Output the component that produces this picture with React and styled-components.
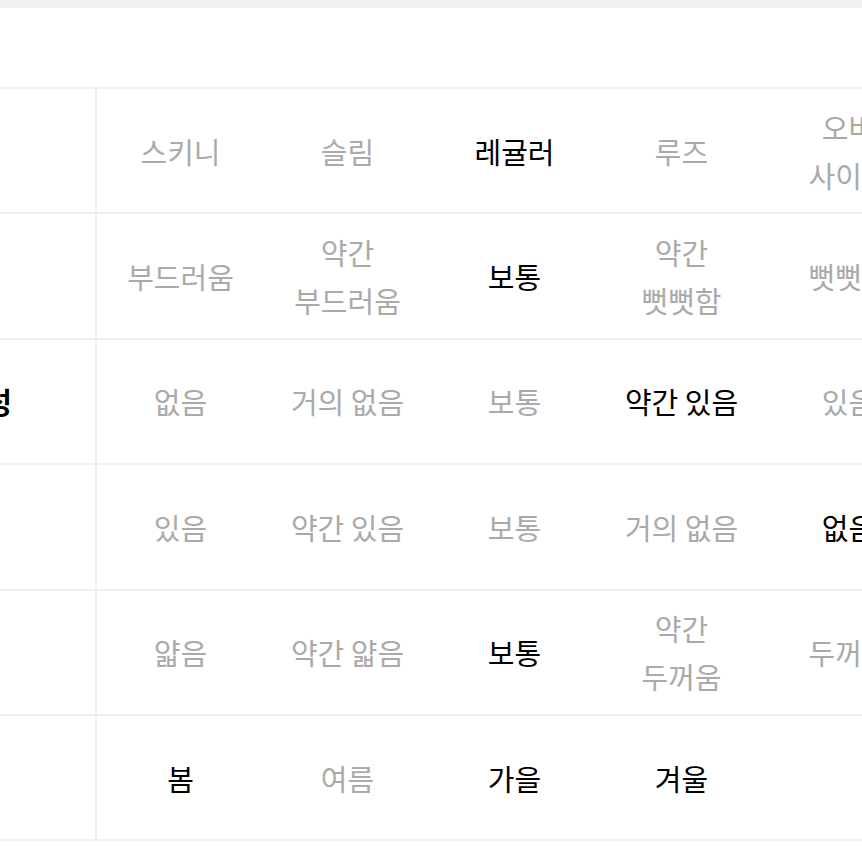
import React from 'react'
import styled, { createGlobalStyle } from 'styled-components'

const GlobalStyle = createGlobalStyle`
  html, body {
    margin: 0;
    padding: 0;
    background: #fff;
    overflow: hidden;
  }
  body {
    font-family: "Noto Sans CJK KR", "Noto Sans", sans-serif;
  }
`

const Page = styled.div`
  width: 862px;
  height: 862px;
  overflow: hidden;
`

const TopBar = styled.div`
  height: 8px;
  background: #f0f0f0;
`

const Header = styled.div`
  height: 79px;
  background: #fff;
`

// the table is scrolled sideways, so the label column is partly hidden
const Table = styled.div`
  margin-left: -97px;
  border-top: 2px solid #efefef;
  width: max-content;
`

const Row = styled.div`
  display: flex;
  height: 125.4px;
  box-sizing: border-box;
  border-bottom: 2px solid #efefef;
`

const Label = styled.div`
  width: 194px;
  flex: none;
  box-sizing: border-box;
  padding-left: 29px;
  border-right: 2px solid #efefef;
  display: flex;
  align-items: center;
  font-size: 29px;
  font-weight: 700;
  color: #000;
`

const Cell = styled.div`
  width: 167px;
  flex: none;
  box-sizing: border-box;
  padding: 0 22px;
  display: flex;
  align-items: center;
  justify-content: center;
  text-align: center;
  font-size: 29px;
  line-height: 48px;
  word-break: keep-all;
  color: ${p => (p.$on ? '#000' : '#aaaaaa')};
`

const rows = [
  { label: '핏', items: ['스키니', '슬림', '레귤러', '루즈', '오버 사이즈'], on: [2] },
  { label: '촉감', items: ['부드러움', '약간 부드러움', '보통', '약간 뻣뻣함', '뻣뻣함'], on: [2] },
  { label: '신축성', items: ['없음', '거의 없음', '보통', '약간 있음', '있음'], on: [3] },
  { label: '비침', items: ['있음', '약간 있음', '보통', '거의 없음', '없음'], on: [4] },
  { label: '두께', items: ['얇음', '약간 얇음', '보통', '약간 두꺼움', '두꺼움'], on: [2] },
  { label: '계절', items: ['봄', '여름', '가을', '겨울', ''], on: [0, 2, 3] },
]

export default function App() {
  return (
    <Page>
      <GlobalStyle />
      <TopBar />
      <Header />
      <Table>
        {rows.map(r => (
          <Row key={r.label}>
            <Label>{r.label}</Label>
            {r.items.map((t, i) => (
              <Cell key={i} $on={r.on.includes(i)}>{t}</Cell>
            ))}
          </Row>
        ))}
      </Table>
    </Page>
  )
}
